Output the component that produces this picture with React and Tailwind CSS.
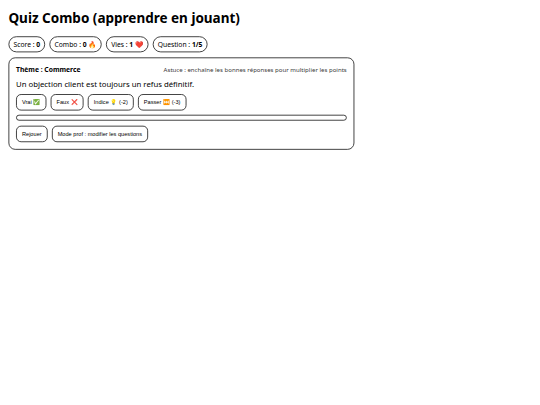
import { useState } from "react";

const questions = [
  { theme: "Commerce", text: "Un objection client est toujours un refus définitif." },
];

function Pill({ label, value }) {
  return (
    <div className="h-[38px] shrink-0 whitespace-nowrap rounded-full border-2 border-[#222] px-[10px] py-[6px] text-[16px] leading-[22px]">
      {label} : <b>{value}</b>
    </div>
  );
}

function Button({ children, onClick }) {
  return (
    <button
      onClick={onClick}
      className="h-[39px] shrink-0 whitespace-nowrap rounded-[12px] border-2 border-[#222] bg-white px-[12px] font-['Liberation_Sans',sans-serif] text-[13.333px] leading-[15px] text-black"
    >
      {children}
    </button>
  );
}

export default function App() {
  const [score, setScore] = useState(0);
  const question = questions[0];

  return (
    <div className="h-[405px] w-[540px] overflow-hidden bg-white">
      <div className="h-[960px] w-[1280px] origin-top-left scale-[0.421875] px-5 pt-[21.4px] font-['Noto_Sans',sans-serif] text-black">
        <h1 className="text-[32px] font-bold leading-[44px]">Quiz Combo (apprendre en jouant)</h1>

        <div className="mt-[20.6px] flex gap-[10px]">
          <Pill label="Score" value={score} />
          <Pill label="Combo" value="0 🔥" />
          <Pill label="Vies" value="1 ❤️" />
          <Pill label="Question" value="1/5" />
        </div>

        <div className="mt-[12px] w-[820px] rounded-[16px] border-2 border-[#222] p-4">
          <div className="flex items-baseline justify-between text-[16px] leading-[22px]">
            <b>Thème : {question.theme}</b>
            <span className="text-[14.4px] leading-[20px] opacity-80">
              Astuce : enchaîne les bonnes réponses pour multiplier les points
            </span>
          </div>

          <p className="mt-[11px] text-[18.4px] leading-[25px]">{question.text}</p>

          <div className="mt-[11px] flex gap-[10px]">
            <Button>Vrai ✅</Button>
            <Button onClick={() => setScore(score + 1)}>Faux ❌</Button>
            <Button>Indice 💡 (-2)</Button>
            <Button>Passer ⏭️ (-3)</Button>
          </div>

          <div className="mt-[10px] h-[14px] rounded-full border-2 border-[#222]"></div>

          <div className="mt-3 flex gap-[10px]">
            <Button onClick={() => setScore(0)}>Rejouer</Button>
            <Button>Mode prof : modifier les questions</Button>
          </div>
        </div>
      </div>
    </div>
  );
}
